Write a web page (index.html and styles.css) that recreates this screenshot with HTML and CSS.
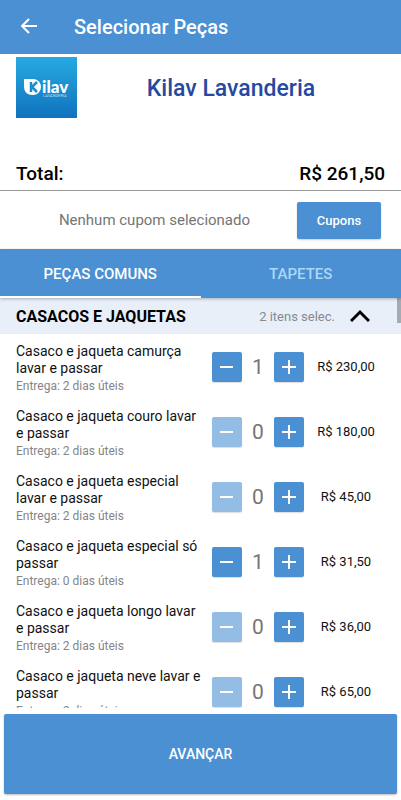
FILE: index.html
```html
<!DOCTYPE html>
<html lang="pt-BR">
<head>
<meta charset="utf-8">
<meta name="viewport" content="width=device-width, initial-scale=1">
<title>Selecionar Peças</title>
<link rel="stylesheet" href="styles.css">
</head>
<body>
<header class="appbar">
  <a class="back" href="#" aria-label="Voltar">
    <svg width="18" height="18" viewBox="0 0 18 18" fill="none" stroke="currentColor" stroke-width="2"><path d="M17 8H2M9 1 2 8 9 15"/></svg>
  </a>
  <h1>Selecionar Peças</h1>
</header>
<section class="store">
  <svg class="logo" viewBox="0 0 61 61" role="img" aria-label="Kilav Lavanderia">
    <defs>
      <linearGradient id="sky" x1="0" y1="0" x2="0" y2="1"><stop offset="0" stop-color="#27aae1"/><stop offset="1" stop-color="#1072bd"/></linearGradient>
    </defs>
    <rect width="61" height="61" fill="url(#sky)"/>
    <path d="M8 22H17A8 8 0 0 1 17 38C11 38 8 35 8 29Z" fill="#fff"/>
    <path d="M15 25V35M21 25 16 30 21 35" fill="none" stroke="#1a8dce" stroke-width="2.5"/>
    <text class="logo-word" x="26" y="36">ilav</text>
    <text class="logo-sub" x="27" y="40">LAVANDERIA</text>
  </svg>
  <h2>Kilav Lavanderia</h2>
</section>
<section class="total"><span>Total:</span><span>R$ 261,50</span></section>
<section class="coupon">
  <p>Nenhum cupom selecionado</p>
  <button class="coupon-button" type="button">Cupons</button>
</section>
<nav class="tabs">
  <button class="tab active" type="button">PEÇAS COMUNS</button>
  <button class="tab" type="button">TAPETES</button>
</nav>
<main class="list">
  <span class="thumb"></span>
  <button class="group" type="button" aria-expanded="true">
    <span class="group-name">CASACOS E JAQUETAS</span>
    <span class="group-count">2 itens selec.</span>
    <svg width="20" height="14" viewBox="0 0 20 14" fill="none" stroke="#000" stroke-width="3"><path d="M1 12 10 3l9 9"/></svg>
  </button>
  <ul class="items" id="items">
    <li class="item">
      <div class="info"><h3>Casaco e jaqueta camurça lavar e passar</h3><p>Entrega: 2 dias úteis</p></div>
      <div class="stepper"><button type="button" aria-label="Remover"><svg viewBox="0 0 14 14"><path d="M0 7H13"/></svg></button><output>1</output><button type="button" aria-label="Adicionar"><svg viewBox="0 0 14 14"><path d="M0 7H14M7 0V14"/></svg></button></div>
      <span class="price">R$ 230,00</span>
    </li>
    <li class="item">
      <div class="info"><h3>Casaco e jaqueta couro lavar e passar</h3><p>Entrega: 2 dias úteis</p></div>
      <div class="stepper"><button type="button" disabled aria-label="Remover"><svg viewBox="0 0 14 14"><path d="M0 7H13"/></svg></button><output>0</output><button type="button" aria-label="Adicionar"><svg viewBox="0 0 14 14"><path d="M0 7H14M7 0V14"/></svg></button></div>
      <span class="price">R$ 180,00</span>
    </li>
    <li class="item">
      <div class="info"><h3>Casaco e jaqueta especial lavar e passar</h3><p>Entrega: 2 dias úteis</p></div>
      <div class="stepper"><button type="button" disabled aria-label="Remover"><svg viewBox="0 0 14 14"><path d="M0 7H13"/></svg></button><output>0</output><button type="button" aria-label="Adicionar"><svg viewBox="0 0 14 14"><path d="M0 7H14M7 0V14"/></svg></button></div>
      <span class="price">R$ 45,00</span>
    </li>
    <li class="item">
      <div class="info"><h3>Casaco e jaqueta especial só passar</h3><p>Entrega: 0 dias úteis</p></div>
      <div class="stepper"><button type="button" aria-label="Remover"><svg viewBox="0 0 14 14"><path d="M0 7H13"/></svg></button><output>1</output><button type="button" aria-label="Adicionar"><svg viewBox="0 0 14 14"><path d="M0 7H14M7 0V14"/></svg></button></div>
      <span class="price">R$ 31,50</span>
    </li>
    <li class="item">
      <div class="info"><h3>Casaco e jaqueta longo lavar e passar</h3><p>Entrega: 2 dias úteis</p></div>
      <div class="stepper"><button type="button" disabled aria-label="Remover"><svg viewBox="0 0 14 14"><path d="M0 7H13"/></svg></button><output>0</output><button type="button" aria-label="Adicionar"><svg viewBox="0 0 14 14"><path d="M0 7H14M7 0V14"/></svg></button></div>
      <span class="price">R$ 36,00</span>
    </li>
    <li class="item">
      <div class="info"><h3>Casaco e jaqueta neve lavar e passar</h3><p>Entrega: 2 dias úteis</p></div>
      <div class="stepper"><button type="button" disabled aria-label="Remover"><svg viewBox="0 0 14 14"><path d="M0 7H13"/></svg></button><output>0</output><button type="button" aria-label="Adicionar"><svg viewBox="0 0 14 14"><path d="M0 7H14M7 0V14"/></svg></button></div>
      <span class="price">R$ 65,00</span>
    </li>
  </ul>
</main>
<footer class="footer"><button class="next" type="button">AVANÇAR</button></footer>
</body>
</html>
```
FILE: styles.css
```css
* { box-sizing: border-box; }
html, body { height: 100%; }
body {
  margin: 0;
  display: flex;
  flex-direction: column;
  background: #fff;
  color: #111;
  font-family: Roboto, "Liberation Sans", sans-serif;
}
h1, h2, h3, p, ul { margin: 0; padding: 0; }
button { border: 0; padding: 0; font-family: inherit; cursor: pointer; }
svg { display: block; }

.appbar {
  flex: none;
  display: flex;
  align-items: center;
  gap: 36px;
  height: 54px;
  padding-left: 20px;
  background: #4a90d2;
  color: #fff;
}
.appbar h1 { font-size: 20px; font-weight: 500; line-height: 24px; }
.back { color: inherit; }

.store { flex: none; display: flex; padding: 3px 16px 0; height: 103px; }
.logo { flex: none; width: 61px; height: 61px; }
.logo-word { font: 900 17px Lato, sans-serif; fill: #fff; }
.logo-sub { font: 400 4px Roboto, sans-serif; fill: #b9dcf2; }
.store h2 {
  flex: 1;
  padding: 17px 0 0;
  text-align: center;
  font-size: 23px;
  font-weight: 500;
  line-height: 30px;
  color: #2549a0;
}

.total {
  flex: none;
  display: flex;
  justify-content: space-between;
  align-items: center;
  height: 34px;
  padding: 0 16px;
  border-bottom: 1px solid #999;
  font-size: 19px;
  font-weight: 500;
  color: #000;
}

.coupon { flex: none; display: flex; align-items: center; height: 58px; padding: 0 20px 0 12px; }
.coupon p { flex: 1; text-align: center; font-size: 15px; line-height: 18px; color: #757575; }
.coupon-button {
  width: 84px;
  height: 37px;
  border-radius: 2px;
  background: #4a90d2;
  box-shadow: 0 1px 2px #0003;
  color: #fff;
  font-size: 13px;
  font-weight: 500;
}

.tabs {
  flex: none;
  display: flex;
  height: 49px;
  background: #4a90d2;
  box-shadow: 0 1px 3px #0004;
  z-index: 1;
}
.tab {
  flex: 1;
  padding-top: 3px;
  background: none;
  border-bottom: 2px solid transparent;
  color: #aed6f5;
  font-size: 15px;
  font-weight: 500;
}
.tab.active { border-color: #fff; color: #fff; }

.list { position: relative; flex: 1; min-height: 0; overflow: hidden; }
.thumb { position: absolute; top: 0; right: 0; width: 4px; height: 25px; background: #a5abb3; }
.group {
  display: flex;
  align-items: center;
  width: 100%;
  height: 36px;
  padding: 0 31px 0 16px;
  background: #e8eff9;
  text-align: left;
}
.group-name { flex: 1; font-size: 16px; font-weight: 700; color: #000; }
.group-count { margin-right: 15px; font-size: 13px; color: #858a90; }

.items { list-style: none; padding: 9px 16px 0; }
.item { display: flex; height: 65px; }
.info { flex: 1; min-width: 0; padding-right: 8px; }
.info h3 { font-size: 14px; font-weight: 400; line-height: 17px; }
.info p { font-size: 12px; line-height: 18px; color: #858585; }
.stepper { flex: none; display: flex; height: 48px; align-items: center; }
.stepper button {
  display: grid;
  place-items: center;
  width: 30px;
  height: 30px;
  border-radius: 2px;
  background: #4a90d2;
  box-shadow: 0 1px 1px #0002;
}
.stepper button:disabled { background: #93bde5; }
.stepper svg { width: 14px; height: 14px; fill: none; stroke: #fff; stroke-width: 2; }
.stepper output { width: 32px; text-align: center; font-size: 21px; color: #757575; }
.price { flex: none; width: 81px; padding-left: 3px; text-align: center; font-size: 13px; line-height: 48px; }

.footer { flex: none; padding: 6px 4px; }
.next {
  width: 100%;
  height: 80px;
  border-radius: 2px;
  background: #4a90d2;
  box-shadow: 0 1px 2px #0004;
  color: #fff;
  font-size: 14px;
  font-weight: 500;
}
```
